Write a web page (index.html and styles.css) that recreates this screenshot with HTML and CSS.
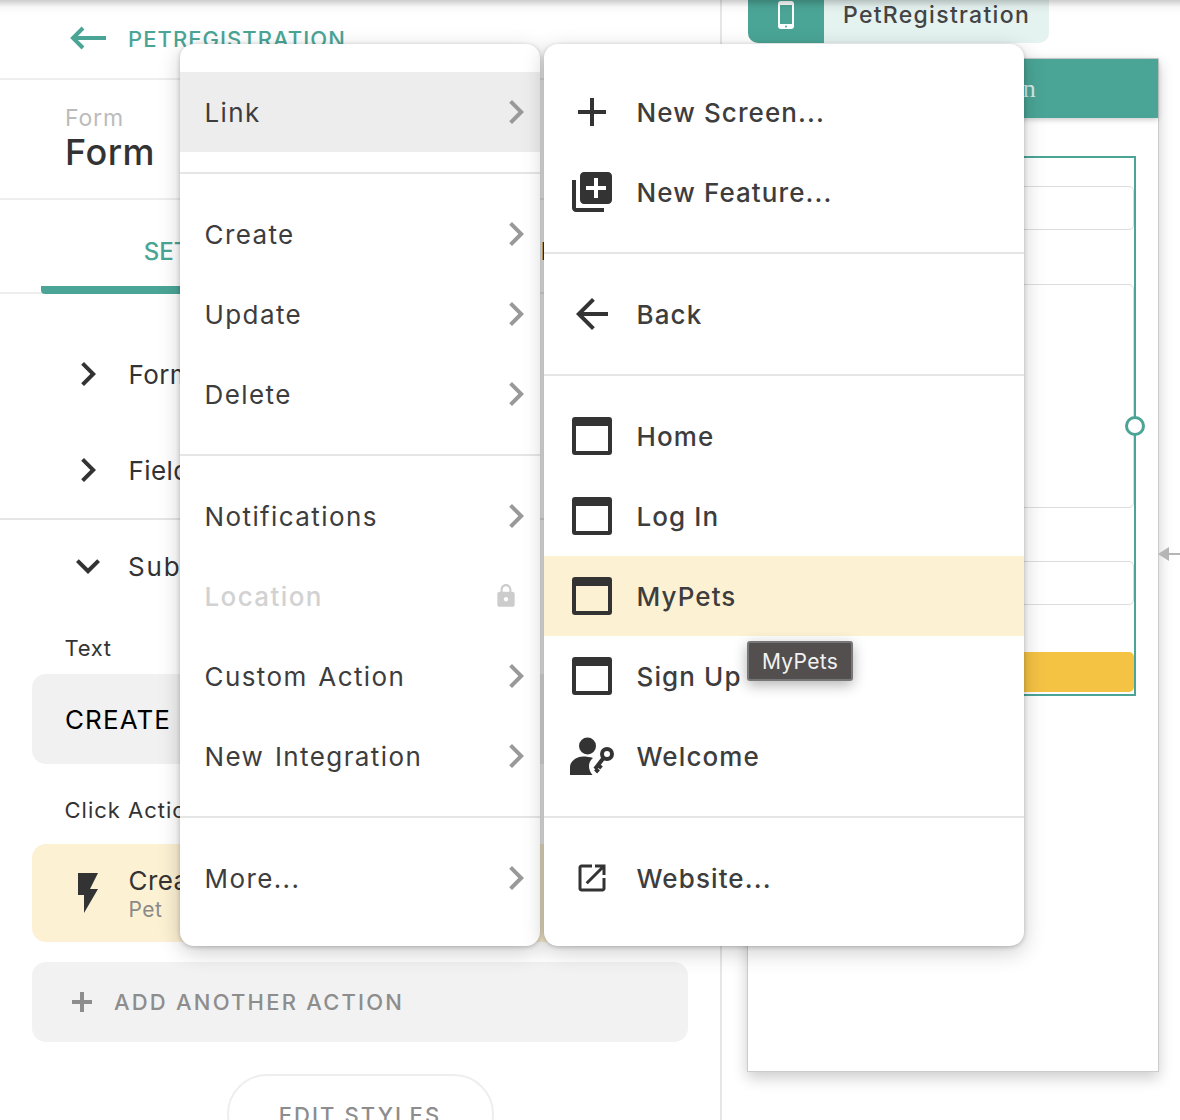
FILE: index.html
```html
<!DOCTYPE html>
<html lang="en">

<head>
    <meta charset="UTF-8">
    <title>PetRegistration | Form</title>
    <link rel="stylesheet" href="styles.css">
</head>

<body>
    <div class="top-shade"></div>

    <div class="panel">
        <div class="panel-head">
            <svg class="back-arrow" viewBox="0 0 36 24"><path d="M13 2 3 12l10 10M3 12h33" fill="none" stroke="#4aa596" stroke-width="4"/></svg>
            <span class="panel-name">PETREGISTRATION</span>
        </div>
        <div class="comp-title">
            <div class="comp-kind">Form</div>
            <div class="comp-name">Form</div>
        </div>
        <div class="tabs">
            <div class="tab tab-active">SETTINGS</div>
            <div class="tab">ACTIONS</div>
        </div>
        <div class="rows">
            <div class="row"><svg class="icon" viewBox="0 0 24 24"><path d="M10 6 8.59 7.41 13.17 12l-4.58 4.59L10 18l6-6z"/></svg><span>Form</span></div>
            <div class="row"><svg class="icon" viewBox="0 0 24 24"><path d="M10 6 8.59 7.41 13.17 12l-4.58 4.59L10 18l6-6z"/></svg><span>Fields</span></div>
        </div>
        <div class="row row-open"><svg class="icon" viewBox="0 0 24 24"><path d="M16.59 8.59 12 13.17 7.41 8.59 6 10l6 6 6-6z"/></svg><span>Submit Button</span></div>
        <div class="field-label label-text">Text</div>
        <div class="text-input">CREATE</div>
        <div class="field-label label-click">Click Actions</div>
        <div class="action-card">
            <svg class="icon" viewBox="0 0 24 24"><path d="M7 2v11h3v9l7-12h-4l4-8z"/></svg>
            <div class="action-text">
                <div class="action-name">Create</div>
                <div class="action-sub">Pet</div>
            </div>
        </div>
        <div class="add-action">
            <svg class="add-plus" viewBox="0 0 20 20"><path d="M8 0h4v8h8v4h-8v8H8v-8H0V8h8z"/></svg>
            <span>ADD ANOTHER ACTION</span>
        </div>
        <div class="edit-styles">EDIT STYLES</div>
    </div>

    <div class="canvas">
        <div class="screen-tab">
            <div class="screen-tab-icon">
                <svg viewBox="0 0 16 28" width="16" height="28"><path fill="#fff" d="M3 0h10a3 3 0 0 1 3 3v22a3 3 0 0 1-3 3H3a3 3 0 0 1-3-3V3a3 3 0 0 1 3-3zm-1 4v19h12V4z"/><circle cx="8" cy="25.5" r="1" fill="#4aa596"/></svg>
            </div>
            <div class="screen-tab-name">PetRegistration</div>
        </div>
        <div class="screen">
            <div class="screen-head">PetRegistration</div>
            <div class="form-box">
                <div class="form-input"></div>
                <div class="form-input form-input-tall"></div>
                <div class="form-input"></div>
                <div class="form-button"></div>
                <div class="handle"></div>
            </div>
        </div>
        <svg class="link-arrow" viewBox="0 0 22 14"><path d="M0 7 11 0v6h11v2H11v6z"/></svg>
    </div>

    <div class="menus">
        <div class="menu menu-main">
            <div class="menu-section">
                <div class="menu-item item-hover">Link<svg class="icon chev" viewBox="0 0 24 24"><path d="M10 6 8.59 7.41 13.17 12l-4.58 4.59L10 18l6-6z"/></svg></div>
            </div>
            <div class="menu-section">
                <div class="menu-item">Create<svg class="icon chev" viewBox="0 0 24 24"><path d="M10 6 8.59 7.41 13.17 12l-4.58 4.59L10 18l6-6z"/></svg></div>
                <div class="menu-item">Update<svg class="icon chev" viewBox="0 0 24 24"><path d="M10 6 8.59 7.41 13.17 12l-4.58 4.59L10 18l6-6z"/></svg></div>
                <div class="menu-item">Delete<svg class="icon chev" viewBox="0 0 24 24"><path d="M10 6 8.59 7.41 13.17 12l-4.58 4.59L10 18l6-6z"/></svg></div>
            </div>
            <div class="menu-section">
                <div class="menu-item">Notifications<svg class="icon chev" viewBox="0 0 24 24"><path d="M10 6 8.59 7.41 13.17 12l-4.58 4.59L10 18l6-6z"/></svg></div>
                <div class="menu-item item-locked">Location<svg class="lock" viewBox="0 0 24 24"><path d="M18 8h-1V6c0-2.76-2.24-5-5-5S7 3.24 7 6v2H6c-1.1 0-2 .9-2 2v10c0 1.1.9 2 2 2h12c1.1 0 2-.9 2-2V10c0-1.1-.9-2-2-2zm-6 9c-1.1 0-2-.9-2-2s.9-2 2-2 2 .9 2 2-.9 2-2 2zm3.1-9H8.9V6c0-1.71 1.39-3.1 3.1-3.1 1.71 0 3.1 1.39 3.1 3.1v2z"/></svg></div>
                <div class="menu-item">Custom Action<svg class="icon chev" viewBox="0 0 24 24"><path d="M10 6 8.59 7.41 13.17 12l-4.58 4.59L10 18l6-6z"/></svg></div>
                <div class="menu-item">New Integration<svg class="icon chev" viewBox="0 0 24 24"><path d="M10 6 8.59 7.41 13.17 12l-4.58 4.59L10 18l6-6z"/></svg></div>
            </div>
            <div class="menu-section">
                <div class="menu-item">More...<svg class="icon chev" viewBox="0 0 24 24"><path d="M10 6 8.59 7.41 13.17 12l-4.58 4.59L10 18l6-6z"/></svg></div>
            </div>
        </div>

        <div class="menu menu-sub">
            <div class="menu-section">
                <div class="menu-item"><svg class="icon" viewBox="0 0 24 24"><path d="M19 13h-6v6h-2v-6H5v-2h6V5h2v6h6v2z"/></svg>New Screen...</div>
                <div class="menu-item"><svg class="icon" viewBox="0 0 24 24"><path d="M4 6H2v14c0 1.1.9 2 2 2h14v-2H4V6zm16-4H8c-1.1 0-2 .9-2 2v12c0 1.1.9 2 2 2h12c1.1 0 2-.9 2-2V4c0-1.1-.9-2-2-2zm-1 9h-4v4h-2v-4H9V9h4V5h2v4h4v2z"/></svg>New Feature...</div>
            </div>
            <div class="menu-section">
                <div class="menu-item"><svg class="icon" viewBox="0 0 24 24"><path d="M20 11H7.83l5.59-5.59L12 4l-8 8 8 8 1.41-1.41L7.83 13H20v-2z"/></svg>Back</div>
            </div>
            <div class="menu-section">
                <div class="menu-item"><span class="icon-box"><svg class="window" viewBox="0 0 40 38"><path fill-rule="evenodd" d="M3 0h34a3 3 0 0 1 3 3v32a3 3 0 0 1-3 3H3a3 3 0 0 1-3-3V3a3 3 0 0 1 3-3zm1 9v25h32V9z"/></svg></span>Home</div>
                <div class="menu-item"><span class="icon-box"><svg class="window" viewBox="0 0 40 38"><path fill-rule="evenodd" d="M3 0h34a3 3 0 0 1 3 3v32a3 3 0 0 1-3 3H3a3 3 0 0 1-3-3V3a3 3 0 0 1 3-3zm1 9v25h32V9z"/></svg></span>Log In</div>
                <div class="menu-item item-selected"><span class="icon-box"><svg class="window" viewBox="0 0 40 38"><path fill-rule="evenodd" d="M3 0h34a3 3 0 0 1 3 3v32a3 3 0 0 1-3 3H3a3 3 0 0 1-3-3V3a3 3 0 0 1 3-3zm1 9v25h32V9z"/></svg></span>MyPets</div>
                <div class="menu-item"><span class="icon-box"><svg class="window" viewBox="0 0 40 38"><path fill-rule="evenodd" d="M3 0h34a3 3 0 0 1 3 3v32a3 3 0 0 1-3 3H3a3 3 0 0 1-3-3V3a3 3 0 0 1 3-3zm1 9v25h32V9z"/></svg></span>Sign Up</div>
                <div class="menu-item"><span class="icon-box"><svg class="person-key" viewBox="0 0 44 38"><circle cx="17.5" cy="9" r="8.5"/><path d="M0 38v-8c0-6 7-10.500 13-10.500 3.500 0 7 .5 10 1.500-2.500 2-4 5-4 8 0 3 1 6 3.500 9z"/><g class="key"><circle cx="37" cy="17" r="5"/><path d="M33.500 21 25 32M28 28l3.500 3M25.500 32l3 3"/></g></svg></span>Welcome</div>
            </div>
            <div class="menu-section">
                <div class="menu-item"><span class="icon-box"><svg class="external" viewBox="0 0 24 24"><path d="M19 19H5V5h7V3H5c-1.11 0-2 .9-2 2v14c0 1.1.89 2 2 2h14c1.1 0 2-.9 2-2v-7h-2v7zM14 3v2h3.59l-9.83 9.83 1.41 1.41L19 6.41V10h2V3h-7z"/></svg></span>Website...</div>
            </div>
        </div>

        <div class="tooltip">MyPets</div>
    </div>
</body>
</html>
```

FILE: styles.css
```css
* {
    box-sizing: border-box;
}

body {
    margin: 0;
    width: 1180px;
    height: 1120px;
    overflow: hidden;
    display: flex;
    background-color: #fff;
    font-family: Inter, 'Noto Sans', sans-serif;
    color: #333;
}

.top-shade {
    position: absolute;
    top: 0;
    left: 0;
    width: 100%;
    height: 14px;
    background: linear-gradient(rgba(0, 0, 0, 0.2), rgba(0, 0, 0, 0.03) 50%, rgba(0, 0, 0, 0));
    z-index: 2;
}

.icon {
    width: 48px;
    height: 48px;
    flex: none;
    fill: #333;
}

/* left panel */
.panel {
    width: 722px;
    flex: none;
    border-right: 2px solid #e6e6e6;
}

.panel-head {
    height: 80px;
    padding: 0 0 2px 70px;
    display: flex;
    align-items: center;
    border-bottom: 2px solid #eee;
}

.back-arrow {
    width: 36px;
    height: 24px;
    flex: none;
}

.panel-name {
    margin-left: 22px;
    padding-top: 2px;
    font-size: 22px;
    font-weight: 500;
    letter-spacing: 1.05px;
    color: #4aa596;
}

.comp-title {
    height: 120px;
    padding: 25px 0 0 65px;
    border-bottom: 2px solid #eee;
}

.comp-kind {
    font-size: 23px;
    line-height: 26px;
    letter-spacing: 0.8px;
    color: #bbb;
}

.comp-name {
    font-size: 36px;
    line-height: 42px;
    font-weight: 500;
    letter-spacing: 0.5px;
    color: #333;
}

.tabs {
    height: 94px;
    padding: 0 41px;
    display: flex;
    border-bottom: 2px solid #eee;
}

.tab {
    flex: 1;
    height: 94px;
    padding-top: 8px;
    display: flex;
    align-items: center;
    justify-content: center;
    font-size: 24px;
    font-weight: 500;
}

.tab-active {
    color: #4aa596;
    border-bottom: 8px solid #4aa596;
    border-radius: 4px;
    padding-top: 16px;
    padding-left: 4px;
}

.rows {
    padding-top: 32px;
    border-bottom: 2px solid #e6e6e6;
}

.row {
    height: 96px;
    padding-left: 64px;
    display: flex;
    align-items: center;
    gap: 16.5px;
    font-size: 26px;
    letter-spacing: 0.4px;
}

.row-open {
    height: 92px;
    gap: 16px;
    letter-spacing: 1.8px;
}

.field-label {
    padding-left: 64.5px;
    font-size: 22px;
    line-height: 26px;
    letter-spacing: 0.7px;
}

.label-text {
    padding-top: 23px;
    height: 62px;
}

.label-click {
    padding-top: 33px;
    height: 80px;
    letter-spacing: 1px;
}

.text-input {
    height: 90px;
    margin: 0 32px;
    padding-left: 33px;
    display: flex;
    align-items: center;
    background-color: #f1f1f1;
    border-radius: 14px;
    font-size: 26px;
    letter-spacing: 1.1px;
    color: #000;
}

.action-card {
    height: 98px;
    margin: 0 32px;
    padding-left: 32px;
    display: flex;
    align-items: center;
    gap: 16.5px;
    background-color: #fdf1d3;
    border-radius: 14px;
}

.action-text {
    padding-top: 3px;
}

.action-name {
    font-size: 26px;
    line-height: 30px;
    letter-spacing: 0.4px;
}

.action-sub {
    font-size: 21px;
    line-height: 27px;
    letter-spacing: 0.5px;
    color: #8a8a8a;
}

.add-action {
    height: 80px;
    margin: 20px 32px 0;
    padding-left: 40px;
    display: flex;
    align-items: center;
    gap: 22px;
    background-color: #f2f2f2;
    border-radius: 14px;
    font-size: 22px;
    font-weight: 500;
    letter-spacing: 2.2px;
    color: #8d8d8d;
}

.add-plus {
    width: 20px;
    height: 20px;
    flex: none;
    fill: #8d8d8d;
}

.edit-styles {
    width: 267px;
    height: 80px;
    margin: 32px auto 0;
    padding-top: 26px;
    text-align: center;
    border: 2px solid #eee;
    border-radius: 40px;
    font-size: 22px;
    font-weight: 500;
    letter-spacing: 2.1px;
    color: #8d8d8d;
}

/* canvas with the phone screen */
.canvas {
    flex: 1;
    padding-left: 26px;
    position: relative;
}

.screen-tab {
    width: 301px;
    height: 43px;
    display: flex;
    background-color: #e4f2f0;
    border-radius: 0 0 10px 10px;
    overflow: hidden;
}

.screen-tab-icon {
    width: 76px;
    height: 100%;
    padding-top: 1px;
    display: flex;
    justify-content: center;
    background-color: #4aa596;
}

.screen-tab-name {
    margin-left: 19px;
    font-size: 23px;
    line-height: 31px;
    font-weight: 500;
    letter-spacing: 1.3px;
    color: #444;
}

.screen {
    width: 412px;
    height: 1014px;
    margin: 15px 0 0 -1px;
    background-color: #fff;
    border: 1px solid #ccc;
    box-shadow: 0 6px 14px rgba(0, 0, 0, 0.2);
}

.screen-head {
    height: 59px;
    line-height: 59px;
    text-align: center;
    font-family: 'Liberation Serif', serif;
    font-size: 26px;
    letter-spacing: 0.4px;
    color: #d5ebe7;
    background-color: #4aa596;
    box-shadow: 0 2px 5px rgba(0, 0, 0, 0.2);
}

.form-box {
    width: 364px;
    height: 540px;
    margin: 38px 0 0 24px;
    padding-top: 28px;
    position: relative;
    border: 2px solid #4aa596;
}

.form-input {
    height: 44px;
    margin-bottom: 54px;
    border: 1px solid #ddd;
    border-radius: 5px;
}

.form-input-tall {
    height: 224px;
    margin-bottom: 53px;
}

.form-button {
    height: 40px;
    margin-top: -7px;
    background-color: #f5c344;
    border-radius: 5px;
}

.handle {
    position: absolute;
    top: 258px;
    right: -11px;
    width: 20px;
    height: 20px;
    background-color: #fff;
    border: 3px solid #4aa596;
    border-radius: 50%;
}

.link-arrow {
    position: absolute;
    top: 547px;
    right: 0;
    width: 22px;
    height: 14px;
    fill: #b5b5b5;
}

/* context menus */
.menus {
    position: absolute;
    top: 44px;
    left: 180px;
    display: flex;
    gap: 4px;
    z-index: 3;
}

.menu {
    height: 902px;
    padding-top: 8px;
    background-color: #fff;
    border-radius: 14px;
    box-shadow: 0 6px 22px rgba(0, 0, 0, 0.2), 0 1px 4px rgba(0, 0, 0, 0.22);
    overflow: hidden;
}

.menu-main {
    width: 360px;
}

.menu-sub {
    width: 480px;
}

.menu-section {
    padding: 20px 0;
    border-bottom: 2px solid #e6e6e6;
}

.menu-section:last-child {
    border-bottom: none;
}

.menu-item {
    height: 80px;
    display: flex;
    align-items: center;
    font-size: 26px;
    font-weight: 400;
    letter-spacing: 1.4px;
    word-spacing: 2px;
    color: #3d3d3d;
}

.menu-main .menu-item {
    padding-left: 24.5px;
}

.menu-sub .menu-item {
    padding-left: 24px;
    gap: 20.5px;
    font-weight: 500;
    letter-spacing: 1.1px;
    word-spacing: 0;
}

.chev {
    margin-left: auto;
    fill: #999;
}

.item-hover {
    background-color: #ededed;
}

.item-selected {
    background-color: #fdf1d3;
}

.menu-main .item-locked {
    color: #d2d2d2;
    font-weight: 500;
}

.lock {
    width: 26px;
    height: 26px;
    margin-left: auto;
    margin-right: 21px;
    fill: #ccc;
}

.icon-box {
    width: 48px;
    height: 48px;
    flex: none;
    display: flex;
    align-items: center;
    justify-content: center;
}

.window {
    width: 40px;
    height: 38px;
    fill: #333;
}

.person-key {
    width: 44px;
    height: 38px;
    flex: none;
    fill: #333;
}

.key {
    fill: none;
    stroke: #333;
    stroke-width: 4;
}

.external {
    width: 36px;
    height: 36px;
    fill: #333;
}

.tooltip {
    position: absolute;
    top: 597px;
    left: 567px;
    width: 106px;
    height: 40px;
    display: flex;
    align-items: center;
    justify-content: center;
    background-color: #534f4f;
    border: 2px solid #777;
    border-radius: 3px;
    box-shadow: 0 4px 14px rgba(0, 0, 0, 0.3);
    font-size: 21px;
    letter-spacing: 0.3px;
    color: #f2f2f2;
}
```
